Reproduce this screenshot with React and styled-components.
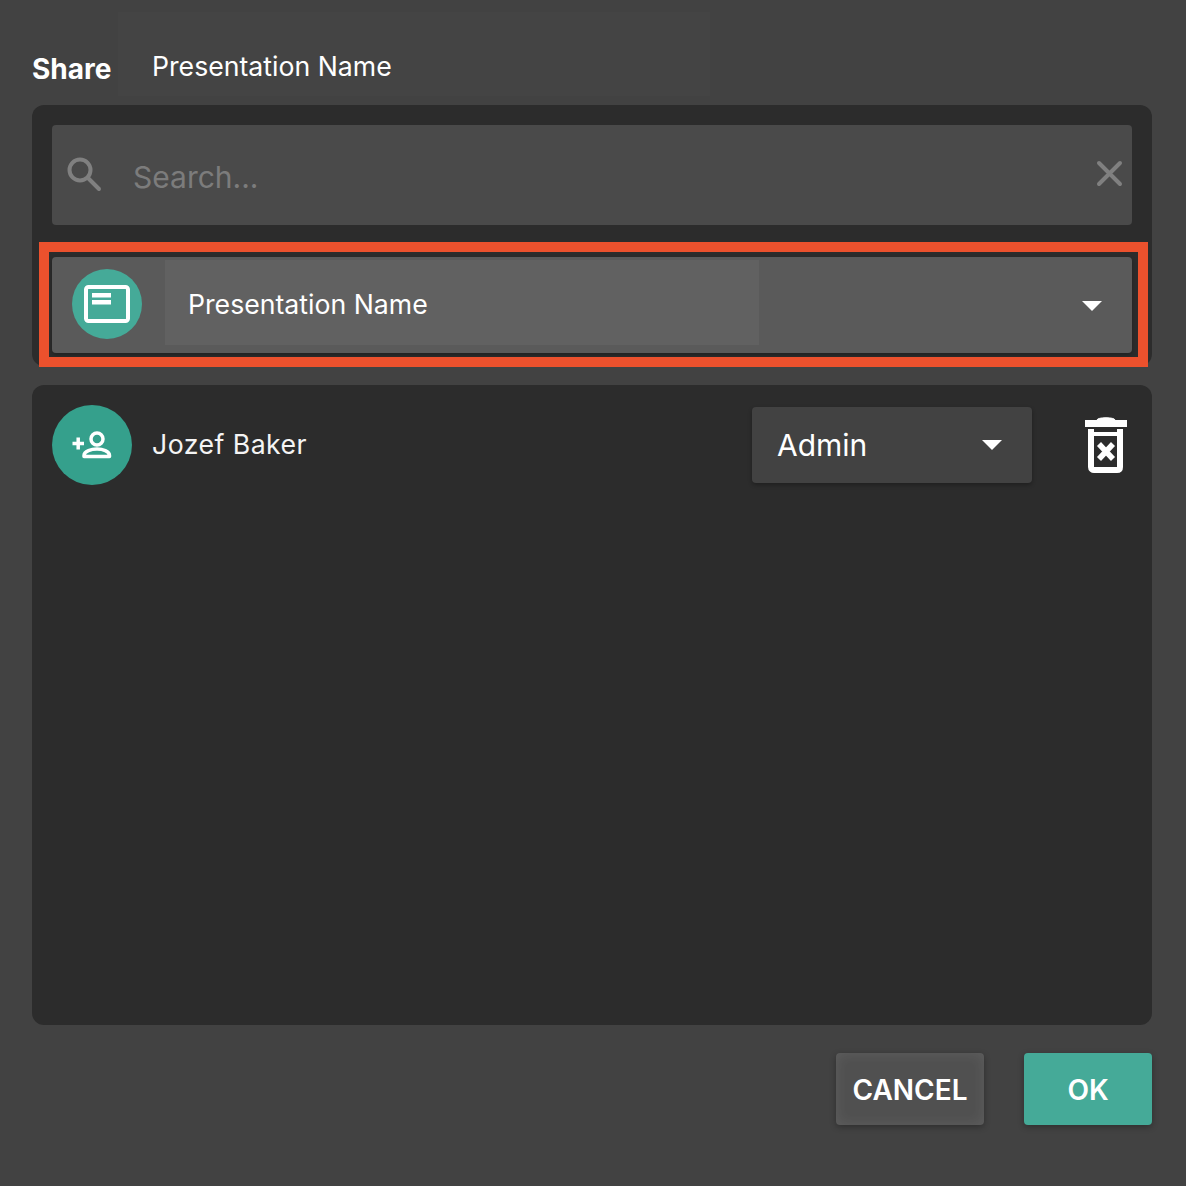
import React from 'react';
import styled, {createGlobalStyle} from 'styled-components';

const GlobalStyle = createGlobalStyle`
    html, body {
        margin: 0;
        padding: 0;
        background: #424242;
        font-family: "Inter", "Liberation Sans", sans-serif;
    }
`;

//whole dialog
const Dialog = styled.div`
    box-sizing: border-box;
    width: 1186px;
    height: 1186px;
    padding: 12px 34px 0 32px;
    background: #424242;
    color: #ffffff;
    display: flex;
    flex-direction: column;
`;

const Header = styled.div`
    display: flex;
    align-items: stretch;
    height: 84px;
    margin-bottom: 9px;
`;

const Title = styled.h2`
    margin: 0;
    width: 86px;
    padding-top: 40px;
    font-size: 28px;
    line-height: 34px;
    font-weight: 700;
`;

const NameField = styled.div`
    width: 558px;
    padding: 37px 0 0 34px;
    background: #444444;
    font-size: 26.67px;
    line-height: 34px;
`;

const Panel = styled.section`
    background: #2c2c2c;
    border-radius: 12px;
    padding: 20px;
`;

const SearchPanel = styled(Panel)`
    position: relative;
    height: 261px;
    box-sizing: border-box;
    padding-bottom: 13px;
    display: flex;
    flex-direction: column;
    gap: 32px;
    margin-bottom: 19px;
`;

const SearchBox = styled.div`
    flex: none;
    height: 100px;
    background: #4a4a4a;
    border-radius: 4px;
    display: flex;
    align-items: center;
    padding: 0 5px 0 14px;
    color: #808080;
`;

const SearchText = styled.span`
    flex: 1;
    margin-left: 31px;
    padding-top: 4px;
    font-size: 30px;
    color: #7c7c7c;
`;

const ItemRow = styled.div`
    position: relative;
    flex: none;
    height: 96px;
    background: #5a5a5a;
    border-radius: 4px;
    box-shadow: 0 2px 4px rgba(0, 0, 0, 0.25);
    display: flex;
    align-items: center;
    padding: 3px 20px;
    box-sizing: border-box;
`;

//red annotation rectangle that sits over the row
const Highlight = styled.div`
    position: absolute;
    left: -13px;
    right: -16px;
    top: -15px;
    bottom: -14px;
    border: 10px solid #ec512d;
    pointer-events: none;
`;

const Avatar = styled.div`
    flex: none;
    width: ${(props) => props.size}px;
    height: ${(props) => props.size}px;
    margin-top: ${(props) => props.$lift || 0}px;
    border-radius: 50%;
    background: ${(props) => props.color};
    display: flex;
    align-items: center;
    justify-content: center;
`;

const ItemName = styled.div`
    width: 594px;
    height: 85px;
    align-self: flex-start;
    margin-left: 23px;
    padding: 3px 0 0 23px;
    box-sizing: border-box;
    background: #616161;
    display: flex;
    align-items: center;
    font-size: 26.67px;
`;

const Caret = styled.span`
    width: 0;
    height: 0;
    border-left: 10px solid transparent;
    border-right: 10px solid transparent;
    border-top: 10px solid #ffffff;
`;

const RowCaret = styled(Caret)`
    margin: 2px 10px 0 auto;
`;

const UsersPanel = styled(Panel)`
    height: 640px;
    box-sizing: border-box;
`;

const UserRow = styled.div`
    display: flex;
    align-items: center;
    height: 80px;
`;

const UserName = styled.div`
    margin: -2px 0 0 20px;
    width: 600px;
    font-size: 26.67px;
    letter-spacing: 0.45px;
    color: #f4f4f4;
`;

const RoleSelect = styled.div`
    flex: none;
    width: 280px;
    height: 76px;
    box-sizing: border-box;
    padding: 0 30px 0 25px;
    background: #424242;
    border-radius: 4px;
    box-shadow: 0 2px 4px rgba(0, 0, 0, 0.3);
    display: flex;
    align-items: center;
    justify-content: space-between;
    font-size: 30px;
`;

const TrashButton = styled.div`
    margin-left: 52px;
    display: flex;
`;

const Footer = styled.div`
    display: flex;
    justify-content: flex-end;
    gap: 40px;
    margin-top: 28px;
`;

const Button = styled.button`
    height: 72px;
    width: ${(props) => props.width}px;
    border: 0;
    border-radius: 4px;
    background: ${(props) => props.$bg};
    box-shadow: ${(props) => props.$glow ? 'inset 0 0 14px rgba(255, 255, 255, 0.09),' : ''} 0 2px 6px rgba(0, 0, 0, 0.3);
    color: #ffffff;
    font-family: inherit;
    font-size: 28px;
    font-weight: 600;
    padding: 2px 0 0;
`;

const SearchIcon = () => (
    <svg width="36" height="36" viewBox="0 0 36 36" fill="none" stroke="#808080" strokeWidth="4" style={{marginTop: -2}}>
        <circle cx="14" cy="14" r="10.5"/>
        <path d="M22 22 L33 33" strokeLinecap="round"/>
    </svg>
);

const ClearIcon = () => (
    <svg width="36" height="36" viewBox="0 0 36 36" fill="none" stroke="#808080" strokeWidth="4" strokeLinecap="round" style={{marginTop: -2}}>
        <path d="M8 7 L29 28 M29 7 L8 28"/>
    </svg>
);

const PresentationIcon = () => (
    <svg width="48" height="40" viewBox="0 0 48 40" fill="none">
        <rect x="3" y="3" width="42" height="34" rx="2.5" stroke="#ffffff" strokeWidth="4"/>
        <rect x="9" y="9" width="19" height="4.5" fill="#ffffff"/>
        <rect x="9" y="16" width="19" height="4.5" fill="#ffffff"/>
    </svg>
);

const AddPersonIcon = () => (
    <svg width="40" height="30" viewBox="0 0 40 30" fill="none" stroke="#ffffff">
        <circle cx="25" cy="9" r="6" strokeWidth="3.5"/>
        <path d="M12 26.5 V25.5 C12 21 19.5 19 25 19 C30.5 19 37.5 21 37.5 25.5 V26.5 Z" strokeWidth="3.5" strokeLinejoin="round"/>
        <path d="M0.5 13.5 H12 M6.2 7.5 V19.5" strokeWidth="3.5"/>
    </svg>
);

const TrashIcon = () => (
    <svg width="44" height="56" viewBox="0 0 44 56" fill="none" stroke="#ffffff">
        <path d="M1 6.5 H43" strokeWidth="7"/>
        <path d="M13 3 C13 0 31 0 31 3 Z" fill="#ffffff" strokeWidth="1"/>
        <path d="M7 12 V50 C7 52 8.5 53 10 53 H33 C35 53 36 52 36 50 V12" strokeWidth="6"/>
        <path d="M6 17 H37" strokeWidth="4"/>
        <path d="M15 27 L29 42 M29 27 L15 42" strokeWidth="5.5"/>
    </svg>
);

export default function App(){
    return (
        <Dialog>
            <GlobalStyle/>
            <Header>
                <Title>Share</Title>
                <NameField>Presentation Name</NameField>
            </Header>
            <SearchPanel>
                <SearchBox>
                    <SearchIcon/>
                    <SearchText>Search...</SearchText>
                    <ClearIcon/>
                </SearchBox>
                <ItemRow>
                    <Avatar size={70} color="#45aa98" $lift={-2}><PresentationIcon/></Avatar>
                    <ItemName>Presentation Name</ItemName>
                    <RowCaret/>
                    <Highlight/>
                </ItemRow>
            </SearchPanel>
            <UsersPanel>
                <UserRow>
                    <Avatar size={80} color="#35a08c"><AddPersonIcon/></Avatar>
                    <UserName>Jozef Baker</UserName>
                    <RoleSelect>
                        Admin
                        <Caret/>
                    </RoleSelect>
                    <TrashButton><TrashIcon/></TrashButton>
                </UserRow>
            </UsersPanel>
            <Footer>
                <Button width={148} $bg="#505050" $glow>CANCEL</Button>
                <Button width={128} $bg="#45aa98">OK</Button>
            </Footer>
        </Dialog>
    );
}
